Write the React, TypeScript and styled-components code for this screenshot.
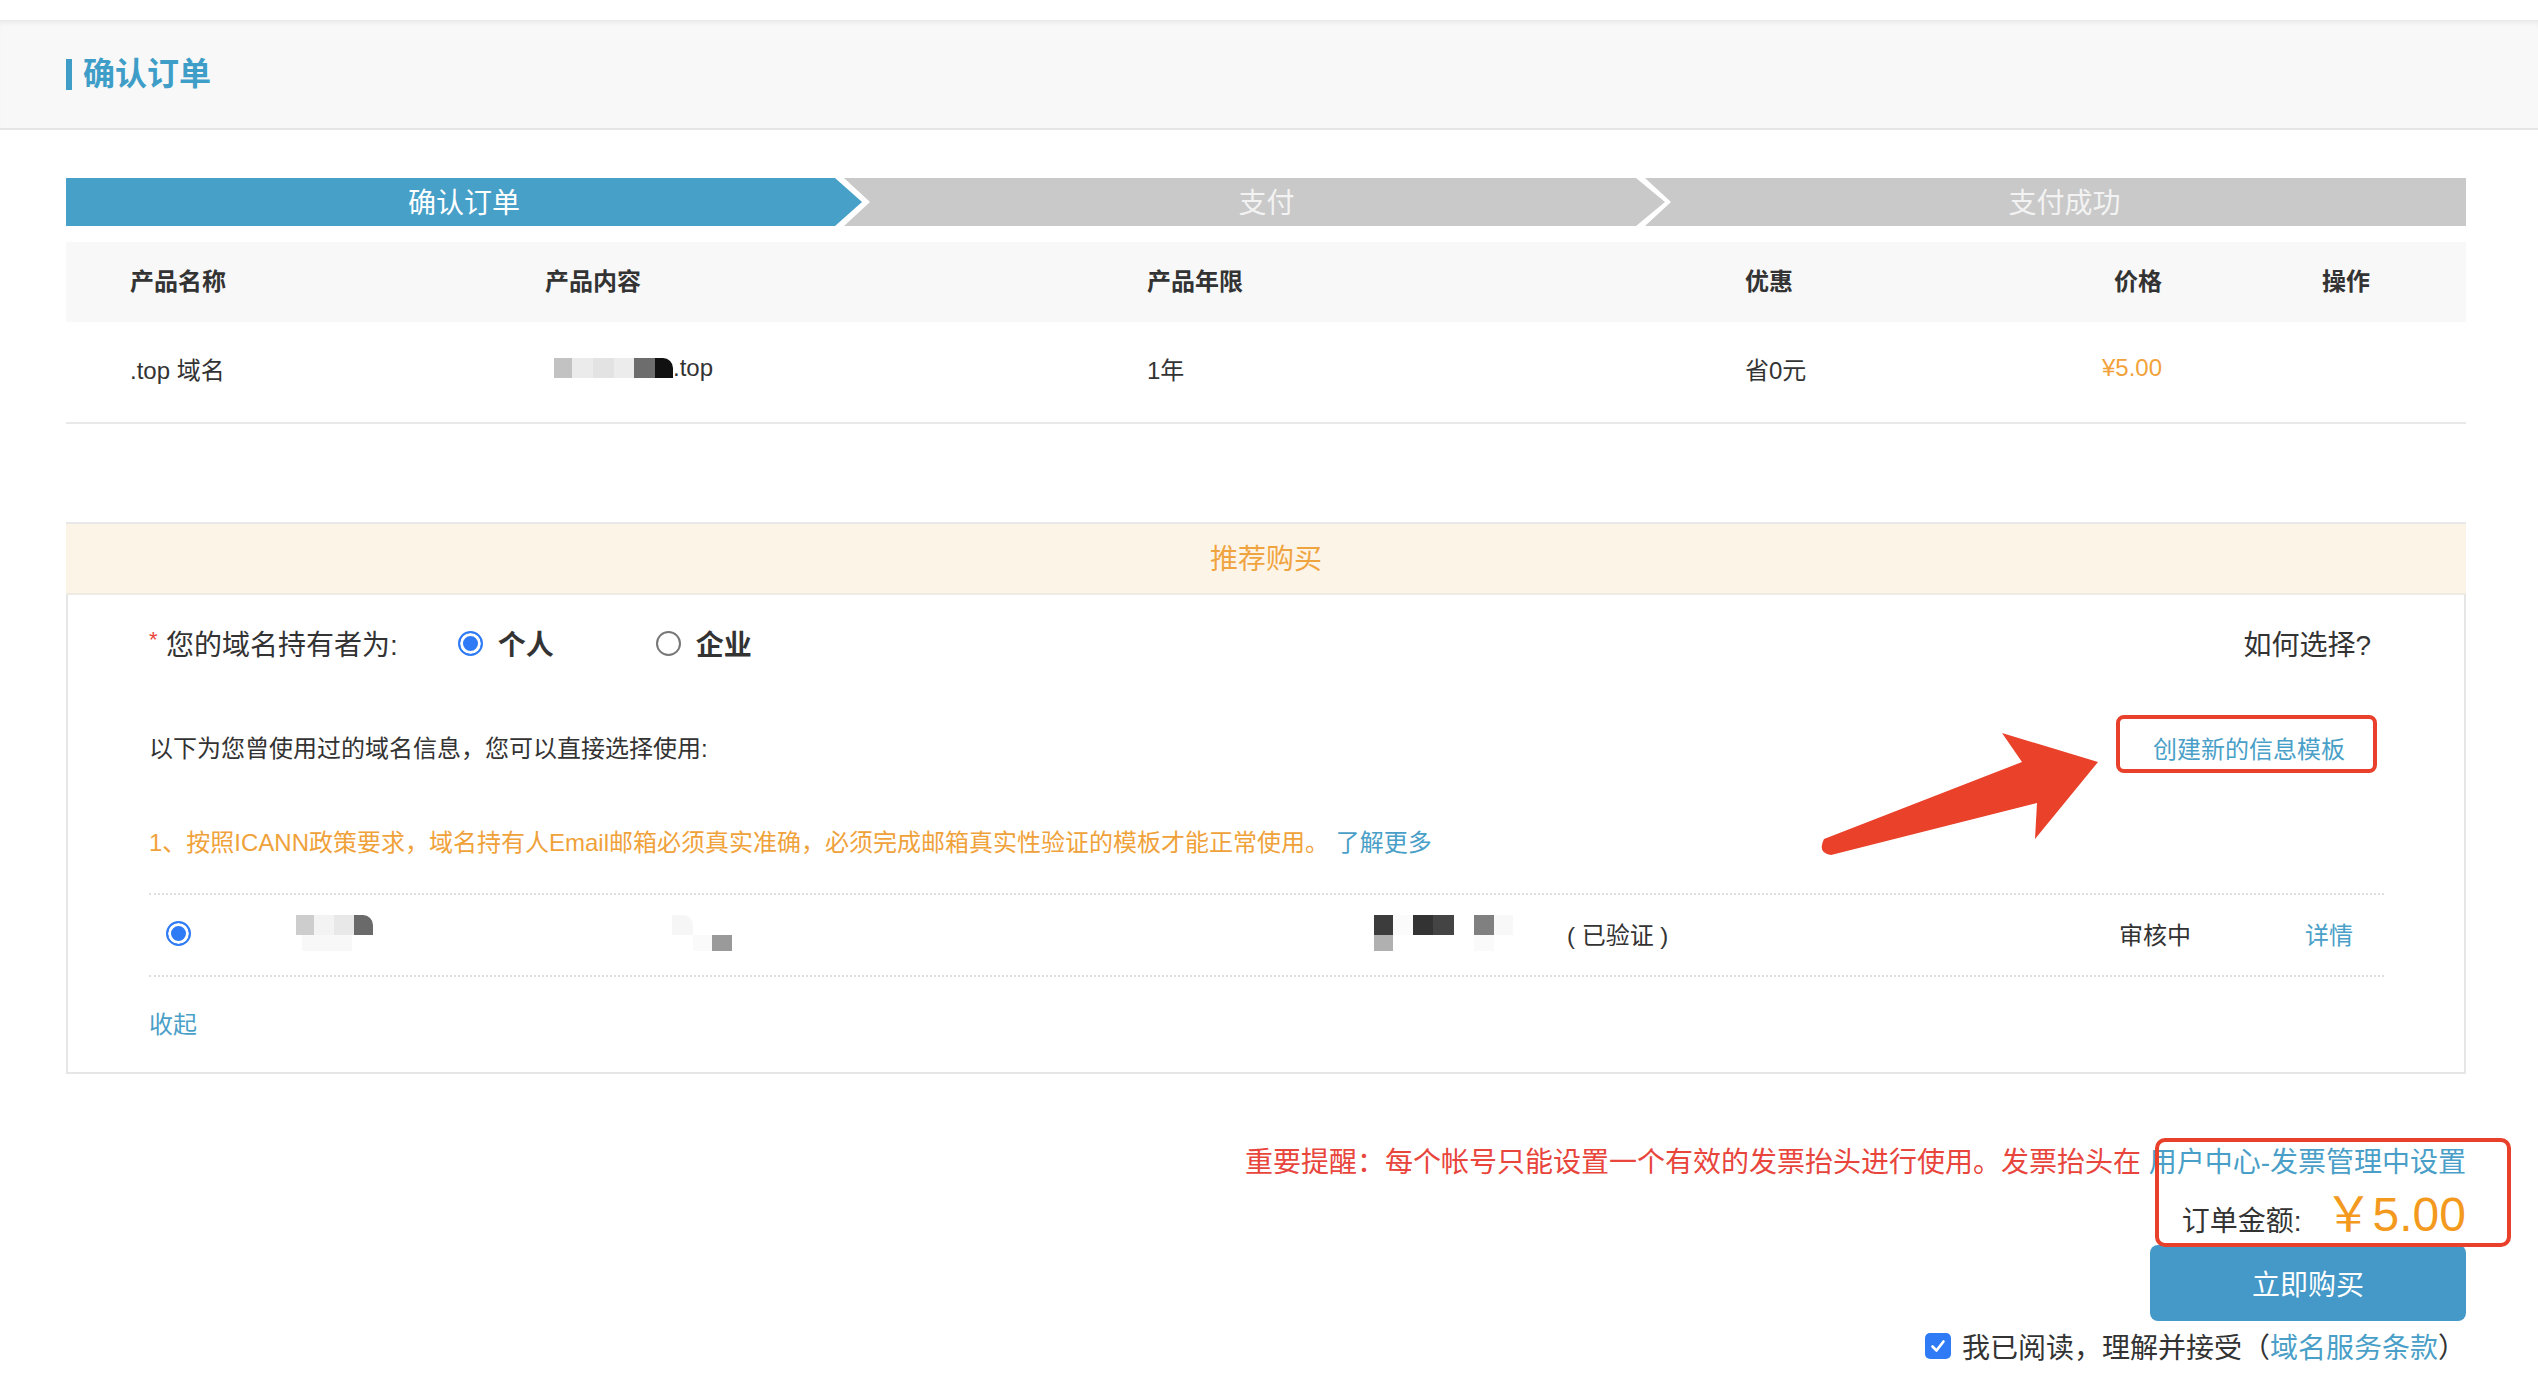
import styled, { createGlobalStyle } from 'styled-components';

const GlobalStyle = createGlobalStyle`
  body {
    margin: 0;
    background: #fff;
    font-family: "Liberation Sans", "Noto Sans CJK SC", sans-serif;
    color: #333;
  }
`;

type StepKind = 'first' | 'mid' | 'last';

const steps: { label: string; kind: StepKind; width: number; active?: boolean }[] = [
  { label: '确认订单', kind: 'first', width: 796, active: true },
  { label: '支付', kind: 'mid', width: 821 },
  { label: '支付成功', kind: 'last', width: 821 },
];

// blurred pixel blocks standing in for masked personal data
type Pixel = [string, number];
const contentMask: Pixel[][] = [
  [['#c2c2c2', 18], ['#ebebeb', 21], ['#e3e3e3', 21], ['#ececec', 20], ['#6d6d6d', 21], ['#111', 18]],
];
const nameMask: Pixel[][] = [
  [['#cdcdcd', 18], ['#f3f3f3', 20], ['#e8e8e8', 20], ['#6a6a6a', 19]],
  [['transparent', 6], ['#f8f8f8', 50]],
];
const idMask: Pixel[][] = [
  [['#f6f6f6', 21]],
  [['transparent', 21], ['#fafafa', 19], ['#9a9a9a', 20]],
];
const mailMask: Pixel[][] = [
  [['#3c3c3c', 19], ['#fbfbfb', 20], ['#333', 20], ['#444', 21], ['#fff', 20], ['#808080', 20], ['#f8f8f8', 19]],
  [['#b0b0b0', 19], ['transparent', 81], ['#fafafa', 20]],
];

function Mask({ rows }: { rows: Pixel[][] }) {
  return (
    <MaskBox>
      {rows.map((row, i) => (
        <PixRow key={i}>
          {row.map(([c, w], j) => (
            <Pix key={j} $c={c} $w={w} $h={i === 0 ? 20 : 16} $round={i === 0 && j === row.length - 1 && c !== '#f8f8f8'} />
          ))}
        </PixRow>
      ))}
    </MaskBox>
  );
}

function App() {
  return (
    <>
      <GlobalStyle />
      <TopBar>
        <PageTitle>确认订单</PageTitle>
      </TopBar>

      <Main>
        <Steps>
          {steps.map((s) => (
            <Step key={s.label} $kind={s.kind} $w={s.width} $active={s.active}>
              {s.label}
            </Step>
          ))}
        </Steps>

        <TableHead>
          <span>产品名称</span>
          <span>产品内容</span>
          <span>产品年限</span>
          <span>优惠</span>
          <PriceCell>价格</PriceCell>
          <ActionCell>操作</ActionCell>
        </TableHead>
        <TableRow>
          <span>.top 域名</span>
          <DomainCell>
            <Mask rows={contentMask} />
            .top
          </DomainCell>
          <span>1年</span>
          <span>省0元</span>
          <PriceCell $orange>¥5.00</PriceCell>
          <ActionCell />
        </TableRow>

        <Band>推荐购买</Band>
        <Panel>
          <OwnerRow>
            <Required>*</Required>
            <span>您的域名持有者为:</span>
            <Choice $first>
              <Radio $checked />
              <ChoiceText>个人</ChoiceText>
            </Choice>
            <Choice>
              <Radio />
              <ChoiceText>企业</ChoiceText>
            </Choice>
            <HowTo>如何选择?</HowTo>
          </OwnerRow>

          <TemplateRow>
            <span>以下为您曾使用过的域名信息，您可以直接选择使用:</span>
            <CreateLink>创建新的信息模板</CreateLink>
          </TemplateRow>

          <Notice>
            1、按照ICANN政策要求，域名持有人Email邮箱必须真实准确，必须完成邮箱真实性验证的模板才能正常使用。
            <Link> 了解更多</Link>
          </Notice>

          <RegRow>
            <RadioCell>
              <Radio $checked />
            </RadioCell>
            <Mask rows={nameMask} />
            <Mask rows={idMask} />
            <Mask rows={mailMask} />
            <span>( 已验证 )</span>
            <span>审核中</span>
            <Link>详情</Link>
          </RegRow>

          <Collapse>收起</Collapse>

          <ArrowMark width="300" height="160" viewBox="0 0 300 160">
            <path
              d="M24 139 L222 62 L202 33 L298 62 L235 139 L237 103 L31 155 Q17 153 24 139 Z"
              fill="#e9412a"
            />
          </ArrowMark>
        </Panel>

        <Checkout>
          <Warning>
            重要提醒：每个帐号只能设置一个有效的发票抬头进行使用。发票抬头在 <Link>用户中心-发票管理中设置</Link>
          </Warning>
          <AmountRow>
            <span>订单金额:</span>
            <Amount>￥5.00</Amount>
          </AmountRow>
          <BuyButton>立即购买</BuyButton>
          <AgreeRow>
            <CheckBox>
              <svg width="18" height="18" viewBox="0 0 18 18">
                <path d="M3.5 9.5 L7.5 13.5 L14.5 4.5" stroke="#fff" strokeWidth="2.6" fill="none" strokeLinecap="round" strokeLinejoin="round" />
              </svg>
            </CheckBox>
            我已阅读，理解并接受（<Link>域名服务条款</Link>）
          </AgreeRow>
          <HighlightBox />
        </Checkout>
      </Main>
    </>
  );
}

export default App;

const TopBar = styled.header`
  margin-top: 20px;
  height: 108px;
  background: #f8f8f8;
  border-bottom: 2px solid #e6e6e6;
  box-shadow: inset 0 6px 6px -4px rgba(0, 0, 0, 0.08);
  display: flex;
  align-items: center;
  padding-left: 66px;
`;

const PageTitle = styled.h1`
  margin: 0;
  font-size: 32px;
  font-weight: 700;
  color: #3f9ec8;
  line-height: 1;
  display: flex;
  align-items: center;
  gap: 11px;
  &::before {
    content: '';
    width: 6px;
    height: 31px;
    background: #3f9ec8;
  }
`;

const Main = styled.main`
  width: 2400px;
  margin-left: 66px;
  padding-top: 48px;
`;

const Steps = styled.div`
  display: flex;
  height: 48px;
  margin-bottom: 16px;
`;

const clips: Record<StepKind, string> = {
  first: 'polygon(0 0, calc(100% - 27px) 0, 100% 50%, calc(100% - 27px) 100%, 0 100%)',
  mid: 'polygon(0 0, calc(100% - 29px) 0, 100% 50%, calc(100% - 29px) 100%, 0 100%, 26px 50%)',
  last: 'polygon(0 0, 100% 0, 100% 100%, 0 100%, 26px 50%)',
};

const Step = styled.div<{ $kind: StepKind; $w: number; $active?: boolean }>`
  flex: none;
  width: ${({ $w }) => $w}px;
  margin-left: ${({ $kind }) => ($kind === 'mid' ? -18 : $kind === 'last' ? -20 : 0)}px;
  padding-left: ${({ $kind }) => ($kind === 'mid' ? 24 : $kind === 'last' ? 18 : 0)}px;
  padding-bottom: 2px;
  box-sizing: border-box;
  clip-path: ${({ $kind }) => clips[$kind]};
  background: ${({ $active }) => ($active ? '#46a0c8' : '#c9c9c9')};
  color: ${({ $active }) => ($active ? '#fff' : '#f3f3f3')};
  font-size: 28px;
  display: flex;
  align-items: center;
  justify-content: center;
`;

const TableHead = styled.div`
  display: grid;
  grid-template-columns: 415px 602px 598px 300px 117px 1fr;
  align-items: center;
  box-sizing: border-box;
  padding-left: 64px;
  padding-bottom: 6px;
  height: 80px;
  background: #f8f8f8;
  font-size: 24px;
  font-weight: 700;
`;

const TableRow = styled(TableHead)`
  height: 102px;
  padding-bottom: 8px;
  background: #fff;
  font-weight: 400;
  border-bottom: 2px solid #e9e9e9;
`;

const PriceCell = styled.span<{ $orange?: boolean }>`
  text-align: right;
  color: ${({ $orange }) => ($orange ? '#f2a23a' : 'inherit')};
`;

const ActionCell = styled.span`
  padding-left: 160px;
`;

const DomainCell = styled.span`
  display: flex;
  align-items: center;
  padding-left: 9px;
`;

const MaskBox = styled.span`
  display: inline-flex;
  flex-direction: column;
  align-self: center;
`;

const PixRow = styled.span`
  display: flex;
`;

const Pix = styled.span<{ $c: string; $w: number; $h: number; $round?: boolean }>`
  width: ${({ $w }) => $w}px;
  height: ${({ $h }) => $h}px;
  background: ${({ $c }) => $c};
  border-top-right-radius: ${({ $round }) => ($round ? '10px' : '0')};
`;

const Band = styled.div`
  margin-top: 98px;
  height: 73px;
  padding-bottom: 3px;
  box-sizing: border-box;
  background: #fdf4e8;
  border-top: 2px solid #e8e8e8;
  border-bottom: 2px solid #eeeae4;
  display: flex;
  align-items: center;
  justify-content: center;
  color: #f0a43f;
  font-size: 28px;
`;

const Panel = styled.section`
  position: relative;
  border: 2px solid #e6e6e6;
  border-top: none;
  padding: 22px 80px 29px 81px;
  font-size: 24px;
`;

const OwnerRow = styled.div`
  display: flex;
  align-items: center;
  height: 52px;
  font-size: 28px;
  color: #333;
`;

const Required = styled.span`
  color: #e8453c;
  font-size: 22px;
  width: 17px;
  align-self: flex-start;
  padding-top: 10px;
`;

const Choice = styled.label<{ $first?: boolean }>`
  display: flex;
  align-items: center;
  gap: 15px;
  margin-left: ${({ $first }) => ($first ? 60 : 102)}px;
`;

const ChoiceText = styled.span`
  font-weight: 700;
`;

const Radio = styled.span<{ $checked?: boolean }>`
  width: 25px;
  height: 25px;
  box-sizing: border-box;
  border-radius: 50%;
  border: 2px solid ${({ $checked }) => ($checked ? '#2f7bf5' : '#777')};
  background: ${({ $checked }) => ($checked ? '#2f7bf5' : '#fff')};
  box-shadow: ${({ $checked }) => ($checked ? 'inset 0 0 0 3px #fff' : 'none')};
`;

const HowTo = styled.span`
  margin-left: auto;
  margin-right: 13px;
`;

const TemplateRow = styled.div`
  margin-top: 46px;
  height: 58px;
  display: flex;
  align-items: center;
  justify-content: space-between;
  padding-top: 4px;
  box-sizing: border-box;
`;

const CreateLink = styled.a`
  height: 58px;
  box-sizing: border-box;
  margin-top: -4px;
  margin-right: 7px;
  padding: 6px 28px 0 33px;
  border: 4px solid #e8402a;
  border-radius: 8px;
  color: #4a9fc8;
  display: flex;
  align-items: center;
`;

const Link = styled.a`
  color: #4a9fc8;
`;

const Notice = styled.p`
  margin: 52px 0 0;
  line-height: 36px;
  color: #f0a23a;
`;

const RegRow = styled.div`
  margin-top: 32px;
  height: 84px;
  box-sizing: border-box;
  border-top: 2px dotted #dedede;
  border-bottom: 2px dotted #dedede;
  display: grid;
  grid-template-columns: 147px 376px 702px 193px 552px 186px auto;
  align-items: center;
  padding-bottom: 4px;
`;

const RadioCell = styled.span`
  display: flex;
  padding-left: 17px;
`;

const Collapse = styled.a`
  display: block;
  margin-top: 30px;
  line-height: 36px;
  color: #4a9fc8;
`;

const ArrowMark = styled.svg`
  position: absolute;
  left: 1732px;
  top: 105px;
`;

const Checkout = styled.div`
  position: relative;
  margin-top: 69px;
  display: flex;
  flex-direction: column;
  align-items: flex-end;
  font-size: 28px;
`;

const Warning = styled.div`
  line-height: 40px;
  color: #e8453c;
`;

const AmountRow = styled.div`
  height: 62px;
  box-sizing: border-box;
  padding-top: 8px;
  display: flex;
  align-items: baseline;
  gap: 23px;
  line-height: 1;
  color: #333;
`;

const Amount = styled.span`
  font-size: 48px;
  color: #f39a1e;
`;

const BuyButton = styled.button`
  width: 316px;
  height: 76px;
  border: none;
  border-radius: 8px;
  background: #4599c8;
  color: #fff;
  font-family: inherit;
  font-size: 28px;
`;

const AgreeRow = styled.div`
  margin-top: 5px;
  height: 40px;
  display: flex;
  align-items: center;
  color: #333;
`;

const CheckBox = styled.span`
  width: 26px;
  height: 26px;
  border-radius: 5px;
  background: #2f7bf5;
  margin-right: 11px;
  display: flex;
  align-items: center;
  justify-content: center;
`;

const HighlightBox = styled.div`
  position: absolute;
  right: -45px;
  top: -5px;
  width: 356px;
  height: 109px;
  box-sizing: border-box;
  border: 4px solid #e8402a;
  border-radius: 10px;
  pointer-events: none;
`;
